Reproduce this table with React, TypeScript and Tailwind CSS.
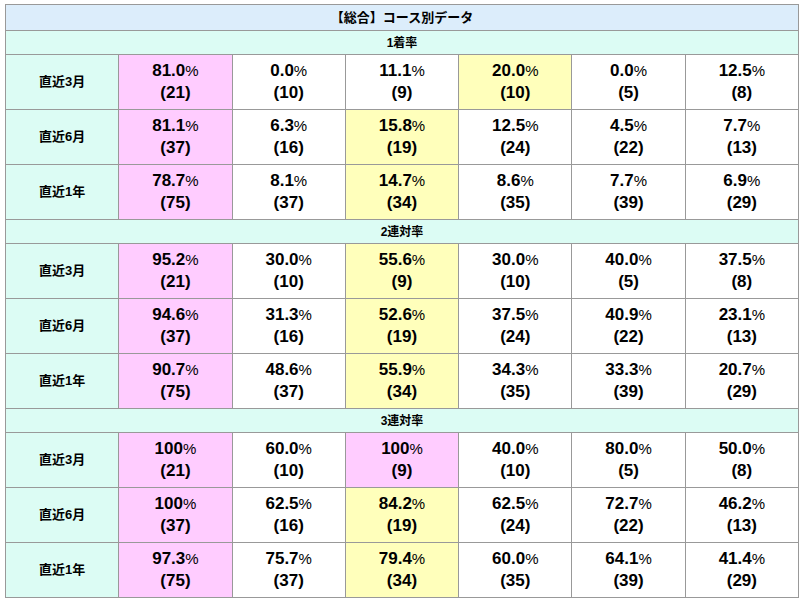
import React from 'react'

type Cell = { v: string; n: number; c?: 'p' | 'y' }

const sections: { title: string; rows: { label: string; cells: Cell[] }[] }[] = [
  {
    title: '1着率',
    rows: [
      { label: '直近3月', cells: [{ v: '81.0', n: 21, c: 'p' }, { v: '0.0', n: 10 }, { v: '11.1', n: 9 }, { v: '20.0', n: 10, c: 'y' }, { v: '0.0', n: 5 }, { v: '12.5', n: 8 }] },
      { label: '直近6月', cells: [{ v: '81.1', n: 37, c: 'p' }, { v: '6.3', n: 16 }, { v: '15.8', n: 19, c: 'y' }, { v: '12.5', n: 24 }, { v: '4.5', n: 22 }, { v: '7.7', n: 13 }] },
      { label: '直近1年', cells: [{ v: '78.7', n: 75, c: 'p' }, { v: '8.1', n: 37 }, { v: '14.7', n: 34, c: 'y' }, { v: '8.6', n: 35 }, { v: '7.7', n: 39 }, { v: '6.9', n: 29 }] },
    ],
  },
  {
    title: '2連対率',
    rows: [
      { label: '直近3月', cells: [{ v: '95.2', n: 21, c: 'p' }, { v: '30.0', n: 10 }, { v: '55.6', n: 9, c: 'y' }, { v: '30.0', n: 10 }, { v: '40.0', n: 5 }, { v: '37.5', n: 8 }] },
      { label: '直近6月', cells: [{ v: '94.6', n: 37, c: 'p' }, { v: '31.3', n: 16 }, { v: '52.6', n: 19, c: 'y' }, { v: '37.5', n: 24 }, { v: '40.9', n: 22 }, { v: '23.1', n: 13 }] },
      { label: '直近1年', cells: [{ v: '90.7', n: 75, c: 'p' }, { v: '48.6', n: 37 }, { v: '55.9', n: 34, c: 'y' }, { v: '34.3', n: 35 }, { v: '33.3', n: 39 }, { v: '20.7', n: 29 }] },
    ],
  },
  {
    title: '3連対率',
    rows: [
      { label: '直近3月', cells: [{ v: '100', n: 21, c: 'p' }, { v: '60.0', n: 10 }, { v: '100', n: 9, c: 'p' }, { v: '40.0', n: 10 }, { v: '80.0', n: 5 }, { v: '50.0', n: 8 }] },
      { label: '直近6月', cells: [{ v: '100', n: 37, c: 'p' }, { v: '62.5', n: 16 }, { v: '84.2', n: 19, c: 'y' }, { v: '62.5', n: 24 }, { v: '72.7', n: 22 }, { v: '46.2', n: 13 }] },
      { label: '直近1年', cells: [{ v: '97.3', n: 75, c: 'p' }, { v: '75.7', n: 37 }, { v: '79.4', n: 34, c: 'y' }, { v: '60.0', n: 35 }, { v: '64.1', n: 39 }, { v: '41.4', n: 29 }] },
    ],
  },
]

const bg = (c?: 'p' | 'y') => (c === 'p' ? 'bg-[#ffccff]' : c === 'y' ? 'bg-[#ffffbb]' : 'bg-white')

export default function App() {
  return (
    <div className="bg-white px-[5px] pt-[4px] font-['Liberation_Sans','Noto_Sans_CJK_JP',sans-serif] text-black">
      <table className="w-[794px] table-fixed border-collapse border border-[#999]">
        <tbody>
          <tr className="h-[26px]">
            <th colSpan={7} className="border border-[#999] bg-[#dcedfb] text-[13px] font-bold">
              【総合】コース別データ
            </th>
          </tr>
          {sections.map((s) => (
            <React.Fragment key={s.title}>
              <tr className="h-[24px]">
                <th colSpan={7} className="border border-[#999] bg-[#dcfcf4] text-[12px] font-bold">
                  {s.title}
                </th>
              </tr>
              {s.rows.map((r) => (
                <tr key={r.label} className="h-[55px]">
                  <th className="border border-[#999] bg-[#dcfcf4] text-[13px] font-bold">{r.label}</th>
                  {r.cells.map((c, i) => (
                    <td key={i} className={`border border-[#999] text-center text-[17px] leading-[22px] font-bold ${bg(c.c)}`}>
                      <div>
                        {c.v}
                        <span className="text-[15px] font-normal">%</span>
                      </div>
                      <div>({c.n})</div>
                    </td>
                  ))}
                </tr>
              ))}
            </React.Fragment>
          ))}
        </tbody>
      </table>
    </div>
  )
}
